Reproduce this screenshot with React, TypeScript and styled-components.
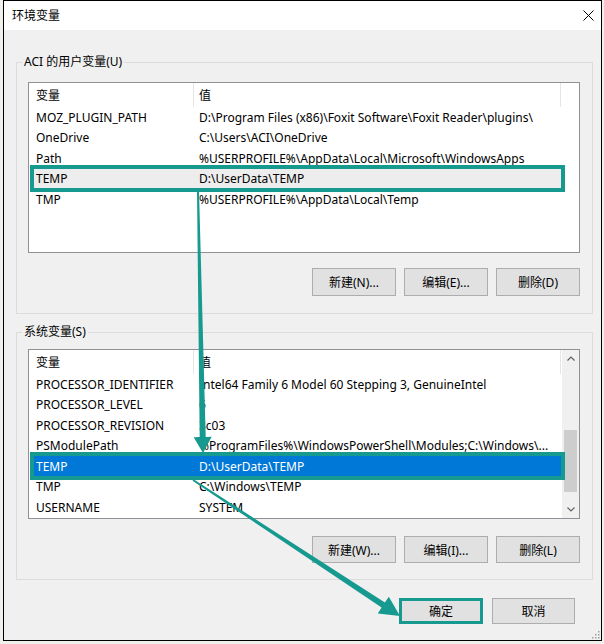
import React from "react";
import styled, { createGlobalStyle, css } from "styled-components";

const TEAL = "#16998f";

const GlobalStyle = createGlobalStyle`
  html, body { margin: 0; padding: 0; background: #f0f0ec; }
  body {
    font-family: "Noto Sans", "Noto Sans CJK SC", sans-serif;
    font-size: 12px;
    color: #000;
  }
  * { box-sizing: border-box; }
`;

const Stage = styled.div`
  position: relative;
  width: 604px;
  height: 644px;
  padding-left: 3px;
`;

const Window = styled.div`
  position: relative;
  width: 599px;
  height: 641px;
  border: 1px solid #000;
  background: #f0f0f0;
  display: flex;
  flex-direction: column;
`;

const TitleBar = styled.div`
  height: 29px;
  flex: none;
  background: #fff;
  display: flex;
  align-items: center;
  justify-content: space-between;
  padding: 0 7px 0 8px;
`;

const Title = styled.span`
  font-size: 12px;
  line-height: 16px;
`;

const CloseIcon = styled.svg`
  width: 11px;
  height: 11px;
  display: block;
`;

const Body = styled.div`
  flex: 1;
  display: flex;
  flex-direction: column;
  padding: 0 8px 0 12px;
`;

const Group = styled.fieldset<{ $mt: number; $pt: number; $pb: number }>`
  margin: ${(p) => p.$mt}px 0 0 0;
  min-width: 0;
  border: 1px solid #dcdcdc;
  padding: ${(p) => p.$pt}px 12px ${(p) => p.$pb}px 11px;
  display: flex;
  flex-direction: column;
`;

const Legend = styled.legend`
  margin-left: -6px;
  padding: 0 2px;
  font-size: 12px;
  line-height: 16px;
`;

const ListView = styled.div<{ $h: number }>`
  position: relative;
  height: ${(p) => p.$h}px;
  border: 1px solid #8e9196;
  background: #fff;
  display: flex;
  overflow: hidden;
`;

const ListBody = styled.div`
  flex: 1;
  min-width: 0;
  display: flex;
  flex-direction: column;
`;

const HeaderRow = styled.div`
  height: 24px;
  flex: none;
  display: flex;
`;

const HeaderCell = styled.div<{ $w: number; $pl: number }>`
  width: ${(p) => p.$w}px;
  flex: none;
  padding-left: ${(p) => p.$pl}px;
  border-right: 1px solid #e5e5e5;
  display: flex;
  align-items: center;
  white-space: nowrap;
`;

const Row = styled.div<{ $state?: "none" | "grey" | "blue" }>`
  position: relative;
  height: 20.5px;
  flex: none;
  margin-left: 2px;
  width: 530px;
  display: flex;
  align-items: center;
  white-space: nowrap;
  ${(p) =>
    p.$state === "grey" &&
    css`
      background: #ededed;
    `}
  ${(p) =>
    p.$state === "blue" &&
    css`
      background: #0078d7;
      color: #fff;
    `}
`;

const NameCell = styled.div`
  width: 163px;
  flex: none;
  padding-left: 5px;
  overflow: hidden;
`;

const ValueCell = styled.div`
  flex: 1;
  min-width: 0;
  padding-left: 5px;
  overflow: hidden;
`;

const Callout = styled.div`
  position: absolute;
  top: -4px;
  bottom: -3px;
  left: -1px;
  right: -4px;
  border: 4px solid ${TEAL};
  pointer-events: none;
`;

const ScrollBar = styled.div`
  width: 17px;
  flex: none;
  background: #f0f0f0;
  display: flex;
  flex-direction: column;
`;

const ScrollArrow = styled.div`
  height: 17px;
  flex: none;
  display: flex;
  align-items: center;
  justify-content: center;
`;

const ScrollTrack = styled.div`
  flex: 1;
  display: flex;
  flex-direction: column;
  align-items: center;
`;

const Thumb = styled.div<{ $top: number; $h: number }>`
  margin-top: ${(p) => p.$top}px;
  width: 13px;
  height: ${(p) => p.$h}px;
  background: #cdcdcd;
`;

const ButtonRow = styled.div<{ $mt: number }>`
  margin-top: ${(p) => p.$mt}px;
  display: flex;
  justify-content: flex-end;
  gap: 8px;
`;

const Button = styled.button<{ $w: number; $h: number; $marked?: boolean }>`
  width: ${(p) => p.$w}px;
  height: ${(p) => p.$h}px;
  padding: 0;
  margin: 0;
  background: #e1e1e1;
  border: 1px solid #adadad;
  font-family: "Noto Sans", "Noto Sans CJK SC", sans-serif;
  font-size: 12px;
  color: #000;
  display: flex;
  align-items: center;
  justify-content: center;
  ${(p) =>
    p.$marked &&
    css`
      border: 3px solid ${TEAL};
    `}
`;

const DialogButtons = styled.div`
  margin-top: 18px;
  padding-right: 18px;
  display: flex;
  justify-content: flex-end;
  gap: 9px;
`;

const Grip = styled.svg`
  position: absolute;
  right: 1px;
  bottom: 1px;
  width: 10px;
  height: 10px;
`;

const Annotations = styled.svg`
  position: absolute;
  left: 0;
  top: 0;
  width: 604px;
  height: 644px;
  pointer-events: none;
`;

type Item = { name: string; value: string; state?: "none" | "grey" | "blue"; marked?: boolean };

const userVars: Item[] = [
  { name: "MOZ_PLUGIN_PATH", value: "D:\\Program Files (x86)\\Foxit Software\\Foxit Reader\\plugins\\" },
  { name: "OneDrive", value: "C:\\Users\\ACI\\OneDrive" },
  { name: "Path", value: "%USERPROFILE%\\AppData\\Local\\Microsoft\\WindowsApps" },
  { name: "TEMP", value: "D:\\UserData\\TEMP", state: "grey", marked: true },
  { name: "TMP", value: "%USERPROFILE%\\AppData\\Local\\Temp" },
];

const sysVars: Item[] = [
  { name: "PROCESSOR_IDENTIFIER", value: "Intel64 Family 6 Model 60 Stepping 3, GenuineIntel" },
  { name: "PROCESSOR_LEVEL", value: "6" },
  { name: "PROCESSOR_REVISION", value: "3c03" },
  { name: "PSModulePath", value: "%ProgramFiles%\\WindowsPowerShell\\Modules;C:\\Windows\\..." },
  { name: "TEMP", value: "D:\\UserData\\TEMP", state: "blue", marked: true },
  { name: "TMP", value: "C:\\Windows\\TEMP" },
  { name: "USERNAME", value: "SYSTEM" },
];

function arrowPoints(
  x0: number, y0: number, x1: number, y1: number,
  w0: number, w1: number, headLen: number, headHalf: number
) {
  const dx = x1 - x0;
  const dy = y1 - y0;
  const L = Math.hypot(dx, dy);
  const ux = dx / L;
  const uy = dy / L;
  const nx = -uy;
  const ny = ux;
  const bx = x1 - ux * headLen;
  const by = y1 - uy * headLen;
  const pts = [
    [x0 + (nx * w0) / 2, y0 + (ny * w0) / 2],
    [bx + (nx * w1) / 2, by + (ny * w1) / 2],
    [bx + nx * headHalf, by + ny * headHalf],
    [x1, y1],
    [bx - nx * headHalf, by - ny * headHalf],
    [bx - (nx * w1) / 2, by - (ny * w1) / 2],
    [x0 - (nx * w0) / 2, y0 - (ny * w0) / 2],
  ];
  return pts.map((p) => `${p[0].toFixed(1)},${p[1].toFixed(1)}`).join(" ");
}

const Chevron = ({ up }: { up?: boolean }) => (
  <svg width="8" height="5" viewBox="0 0 8 5">
    <polyline
      points={up ? "0.5,4.5 4,1 7.5,4.5" : "0.5,0.5 4,4 7.5,0.5"}
      fill="none"
      stroke="#606060"
      strokeWidth="1.2"
    />
  </svg>
);

const Rows = ({ items }: { items: Item[] }) => (
  <>
    {items.map((it) => (
      <Row key={it.name} $state={it.state}>
        <NameCell>{it.name}</NameCell>
        <ValueCell>{it.value}</ValueCell>
        {it.marked && <Callout />}
      </Row>
    ))}
  </>
);

export default function App() {
  return (
    <>
      <GlobalStyle />
      <Stage>
        <Window>
          <TitleBar>
            <Title>环境变量</Title>
            <CloseIcon viewBox="0 0 11 11">
              <line x1="0.5" y1="0.5" x2="10.5" y2="10.5" stroke="#000" strokeWidth="1" />
              <line x1="10.5" y1="0.5" x2="0.5" y2="10.5" stroke="#000" strokeWidth="1" />
            </CloseIcon>
          </TitleBar>
          <Body>
            <Group $mt={24} $pt={12} $pb={17}>
              <Legend>ACI 的用户变量(U)</Legend>
              <ListView $h={171}>
                <ListBody>
                  <HeaderRow>
                    <HeaderCell $w={165} $pl={7}>变量</HeaderCell>
                    <HeaderCell $w={367} $pl={5}>值</HeaderCell>
                  </HeaderRow>
                  <Rows items={userVars} />
                </ListBody>
              </ListView>
              <ButtonRow $mt={15}>
                <Button $w={84} $h={28}>新建(N)...</Button>
                <Button $w={84} $h={28}>编辑(E)...</Button>
                <Button $w={84} $h={28}>删除(D)</Button>
              </ButtonRow>
            </Group>
            <Group $mt={10} $pt={9} $pb={16}>
              <Legend>系统变量(S)</Legend>
              <ListView $h={170}>
                <ListBody>
                  <HeaderRow>
                    <HeaderCell $w={165} $pl={7}>变量</HeaderCell>
                    <HeaderCell $w={367} $pl={5}>值</HeaderCell>
                  </HeaderRow>
                  <Rows items={sysVars} />
                </ListBody>
                <ScrollBar>
                  <ScrollArrow>
                    <Chevron up />
                  </ScrollArrow>
                  <ScrollTrack>
                    <Thumb $top={63} $h={62} />
                  </ScrollTrack>
                  <ScrollArrow>
                    <Chevron />
                  </ScrollArrow>
                </ScrollBar>
              </ListView>
              <ButtonRow $mt={17}>
                <Button $w={84} $h={27}>新建(W)...</Button>
                <Button $w={84} $h={27}>编辑(I)...</Button>
                <Button $w={84} $h={27}>删除(L)</Button>
              </ButtonRow>
            </Group>
            <DialogButtons>
              <Button $w={84} $h={26} $marked>确定</Button>
              <Button $w={83} $h={26}>取消</Button>
            </DialogButtons>
          </Body>
          <Grip viewBox="0 0 10 10">
            {[
              [8, 2], [8, 5], [5, 5], [8, 8], [5, 8], [2, 8],
            ].map(([x, y]) => (
              <rect key={`${x}-${y}`} x={x} y={y} width="1.5" height="1.5" fill="#a0a0a0" />
            ))}
          </Grip>
        </Window>
        <Annotations viewBox="0 0 604 644">
          <polygon points={arrowPoints(198, 191, 203, 453, 2, 6, 16, 9)} fill={TEAL} />
          <polygon points={arrowPoints(193, 480, 400, 616, 2, 6, 20, 10)} fill={TEAL} />
        </Annotations>
      </Stage>
    </>
  );
}
